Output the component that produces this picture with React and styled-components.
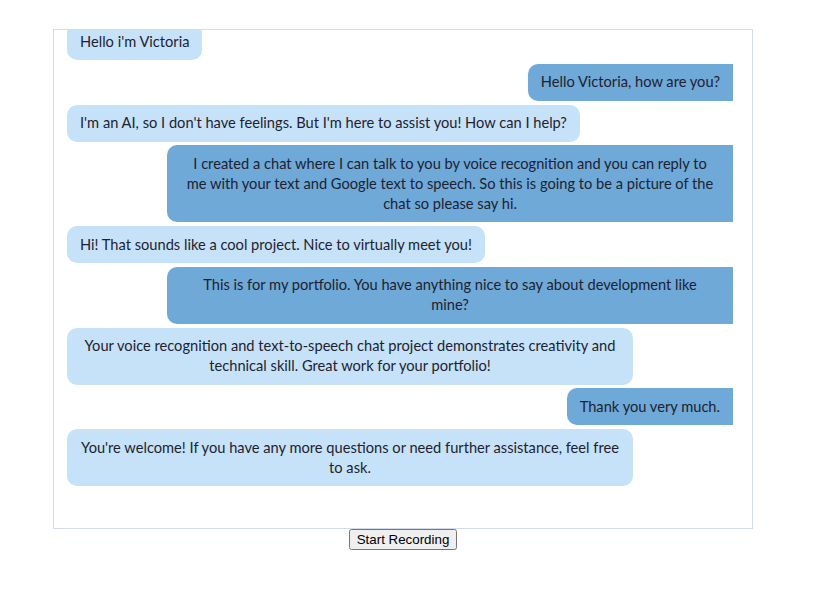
import React, { Fragment, useLayoutEffect, useRef } from "react";
import styled, { createGlobalStyle } from "styled-components";

const GlobalStyle = createGlobalStyle`
  body {
    margin: 8px;
    background: #ffffff;
    font-family: Lato, "Open Sans", sans-serif;
  }
`;

const Page = styled.div`
  width: 700px;
  padding: 21px 0 0 45px;
  display: flex;
  flex-direction: column;
`;

const ChatBox = styled.div`
  box-sizing: border-box;
  height: 500px;
  border: 1px solid #d1dce7;
  overflow: hidden;
  display: flex;
  flex-direction: column;
  gap: 3.75px;
  padding: 10px 0 42px 13px;
`;

const Bubble = styled.div`
  max-width: 566px;
  width: ${(p) => (p.$wide ? "566px" : "auto")};
  box-sizing: border-box;
  padding: 8.5px 13px;
  font-size: 14.65px;
  line-height: 20px;
  color: #1e2230;
  text-align: center;
  flex-shrink: 0;
  align-self: ${(p) => (p.$user ? "flex-end" : "flex-start")};
  background: ${(p) => (p.$user ? "#6ea9d8" : "#c6e2f8")};
  border-radius: ${(p) => (p.$user ? "10px 0 0 10px" : "10px")};
  margin-right: ${(p) => (p.$user ? "19px" : "0")};
`;

const Controls = styled.div`
  display: flex;
  justify-content: center;
`;

const RecordButton = styled.button`
  font-family: "Liberation Sans", Arial, sans-serif;
  font-size: 13.333px;
  padding: 1px 6px;
`;

const messages = [
  { user: false, lines: ["Hello i'm Victoria"] },
  { user: true, lines: ["Hello Victoria, how are you?"] },
  { user: false, lines: ["I'm an AI, so I don't have feelings. But I'm here to assist you! How can I help?"] },
  {
    user: true,
    lines: [
      "I created a chat where I can talk to you by voice recognition and you can reply to",
      "me with your text and Google text to speech. So this is going to be a picture of the",
      "chat so please say hi.",
    ],
  },
  { user: false, lines: ["Hi! That sounds like a cool project. Nice to virtually meet you!"] },
  {
    user: true,
    lines: ["This is for my portfolio. You have anything nice to say about development like", "mine?"],
  },
  {
    user: false,
    lines: [
      "Your voice recognition and text-to-speech chat project demonstrates creativity and",
      "technical skill. Great work for your portfolio!",
    ],
  },
  { user: true, lines: ["Thank you very much."] },
  {
    user: false,
    lines: [
      "You're welcome! If you have any more questions or need further assistance, feel free",
      "to ask.",
    ],
  },
];

export default function App() {
  const boxRef = useRef(null);
  useLayoutEffect(() => {
    const el = boxRef.current;
    if (el) el.scrollTop = el.scrollHeight;
  }, []);
  return (
    <Page>
      <GlobalStyle />
      <ChatBox ref={boxRef}>
        {messages.map((m, i) => (
          <Bubble key={i} $user={m.user} $wide={m.lines.length > 1}>
            {m.lines.map((line, j) => (
              <Fragment key={j}>
                {j > 0 && <br />}
                {line}
              </Fragment>
            ))}
          </Bubble>
        ))}
      </ChatBox>
      <Controls>
        <RecordButton type="button">Start Recording</RecordButton>
      </Controls>
    </Page>
  );
}
